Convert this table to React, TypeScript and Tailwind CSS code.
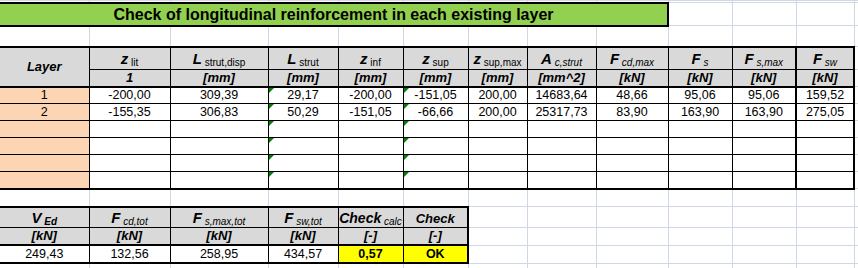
import React from 'react';

const cols = [89, 81, 98, 70, 65, 65, 59, 69, 72, 64, 64, 58, 64];

const grid = 'border border-[#d0d7e5] p-0';

interface SymProps {
  m: string;
  s: string;
  sub?: string;
}

// main letter + lowered index, as in the Excel header cells
const Sym: React.FC<SymProps> = ({ m, s, sub = 'font-normal not-italic' }) => (
  <span className="whitespace-nowrap">
    <span className="text-[15px] font-bold italic">{m}</span>
    <span className={`text-[10px] align-[-2px] ${sub}`}>{'\u00a0' + s}</span>
  </span>
);

const heads: { m: string; s: string; sub?: string; unit: string }[] = [
  { m: 'z', s: 'lit', unit: '1' },
  { m: 'L', s: 'strut,disp', unit: '[mm]' },
  { m: 'L', s: 'strut', unit: '[mm]' },
  { m: 'z', s: 'inf', unit: '[mm]' },
  { m: 'z', s: 'sup', unit: '[mm]' },
  { m: 'z', s: 'sup,max', unit: '[mm]' },
  { m: 'A', s: 'c,strut', sub: 'font-normal italic', unit: '[mm^2]' },
  { m: 'F', s: 'cd,max', sub: 'font-normal italic', unit: '[kN]' },
  { m: 'F', s: 's', sub: 'font-normal italic', unit: '[kN]' },
  { m: 'F', s: 's,max', sub: 'font-normal italic', unit: '[kN]' },
  { m: 'F', s: 'sw', sub: 'font-normal italic', unit: '[kN]' },
];

const rows: string[][] = [
  ['1', '-200,00', '309,39', '29,17', '-200,00', '-151,05', '200,00', '14683,64', '48,66', '95,06', '95,06', '159,52'],
  ['2', '-155,35', '306,83', '50,29', '-151,05', '-66,66', '200,00', '25317,73', '83,90', '163,90', '163,90', '275,05'],
  ['', '', '', '', '', '', '', '', '', '', '', ''],
  ['', '', '', '', '', '', '', '', '', '', '', ''],
  ['', '', '', '', '', '', '', '', '', '', '', ''],
  ['', '', '', '', '', '', '', '', '', '', '', ''],
];

const flagged = [3, 5];

const Corner = () => (
  <span className="absolute left-0 top-0 h-0 w-0 border-t-[5px] border-r-[5px] border-t-[#008000] border-r-transparent" />
);

const GridCells: React.FC<{ from: number }> = ({ from }) => (
  <>
    {cols.slice(from).map((_, i) => (
      <td key={i} className={`${grid} ${from + i === 0 ? 'border-l-0' : ''}`} />
    ))}
  </>
);

const App: React.FC = () => {
  return (
    <div className="w-[858px] h-[268px] overflow-hidden bg-white font-['Liberation_Sans',Arial,sans-serif] text-black">
      <table className="table-fixed border-collapse w-[918px] leading-none">
        <colgroup>
          {cols.map((w, i) => (
            <col key={i} style={{ width: w }} />
          ))}
        </colgroup>
        <tbody>
          <tr className="h-[2px]">
            <GridCells from={0} />
          </tr>

          <tr className="h-[23px]">
            <td
              colSpan={9}
              className="border-2 border-l-0 border-black bg-[#92d050] p-0 pt-[1px] text-center text-[16px] font-bold"
            >
              Check of longitudinal reinforcement in each existing layer
            </td>
            <GridCells from={9} />
          </tr>

          <tr className="h-[21px]">
            <GridCells from={0} />
          </tr>

          {/* header, first line */}
          <tr className="h-[23px]">
            <td
              rowSpan={2}
              className="border border-l-0 border-t-2 border-b-2 border-black bg-[#d9d9d9] p-0 text-center text-[13px] font-bold italic"
            >
              Layer
            </td>
            {heads.map((h, i) => (
              <td
                key={i}
                className={`border border-t-2 border-black bg-[#d9d9d9] p-0 pt-[2px] text-center ${
                  i >= 9 ? 'border-r-2' : ''
                }`}
              >
                <Sym m={h.m} s={h.s} sub={h.sub} />
              </td>
            ))}
            <td className={grid} />
          </tr>

          {/* header, units */}
          <tr className="h-[17px]">
            {heads.map((h, i) => (
              <td
                key={i}
                className={`border border-b-2 border-black bg-[#d9d9d9] p-0 text-center text-[13px] font-bold italic ${
                  i >= 9 ? 'border-r-2' : ''
                }`}
              >
                {h.unit}
              </td>
            ))}
            <td className={grid} />
          </tr>

          {rows.map((r, ri) => (
            <tr key={ri} className="h-[17px]">
              {r.map((v, ci) => (
                <td
                  key={ci}
                  className={`relative border border-black p-0 text-center text-[12.5px] ${
                    ci === 0 ? 'border-l-0 bg-[#fcd5b4]' : ''
                  } ${ci >= 10 ? 'border-r-2' : ''} ${ri === rows.length - 1 ? 'border-b-2' : ''}`}
                >
                  {flagged.includes(ci) && <Corner />}
                  {v}
                </td>
              ))}
              <td className={grid} />
            </tr>
          ))}

          <tr className="h-[18px]">
            <GridCells from={0} />
          </tr>

          {/* totals */}
          <tr className="h-[20px]">
            {[
              { m: 'V', s: 'Ed', sub: 'font-bold italic' },
              { m: 'F', s: 'cd,tot', sub: 'font-normal italic' },
              { m: 'F', s: 's,max,tot', sub: 'font-normal italic' },
              { m: 'F', s: 'sw,tot', sub: 'font-normal italic' },
            ].map((h, i) => (
              <td
                key={i}
                className={`border border-t-2 border-black bg-[#d9d9d9] p-0 pt-[2px] text-center ${
                  i === 0 ? 'border-l-0' : ''
                }`}
              >
                <Sym m={h.m} s={h.s} sub={h.sub} />
              </td>
            ))}
            <td className="border border-t-2 border-black bg-[#d9d9d9] p-0 pt-[2px] text-center whitespace-nowrap">
              <span className="text-[14px] font-bold italic">Check</span>
              <span className="text-[10px] italic align-[-2px]">{'\u00a0'}calc</span>
            </td>
            <td className="border border-t-2 border-r-2 border-black bg-[#d9d9d9] p-0 pt-[2px] text-center text-[13px] font-bold italic">
              Check
            </td>
            <GridCells from={6} />
          </tr>

          <tr className="h-[18px]">
            {['[kN]', '[kN]', '[kN]', '[kN]', '[-]', '[-]'].map((u, i) => (
              <td
                key={i}
                className={`border border-black bg-[#d9d9d9] p-0 text-center text-[13px] font-bold italic ${
                  i === 0 ? 'border-l-0' : ''
                } ${i === 5 ? 'border-r-2' : ''}`}
              >
                {u}
              </td>
            ))}
            <GridCells from={6} />
          </tr>

          <tr className="h-[18px]">
            {['249,43', '132,56', '258,95', '434,57'].map((v, i) => (
              <td
                key={i}
                className={`border border-t-2 border-b-2 border-black p-0 text-center text-[12.5px] ${
                  i === 0 ? 'border-l-0' : ''
                }`}
              >
                {v}
              </td>
            ))}
            <td className="border border-t-2 border-b-2 border-black bg-[#ffff00] p-0 text-center text-[12.5px] font-bold">
              0,57
            </td>
            <td className="border border-t-2 border-b-2 border-r-2 border-black bg-[#ffff00] p-0 text-center text-[12.5px] font-bold">
              OK
            </td>
            <GridCells from={6} />
          </tr>

          <tr className="h-[17px]">
            <GridCells from={0} />
          </tr>
        </tbody>
      </table>
    </div>
  );
};

export default App;
